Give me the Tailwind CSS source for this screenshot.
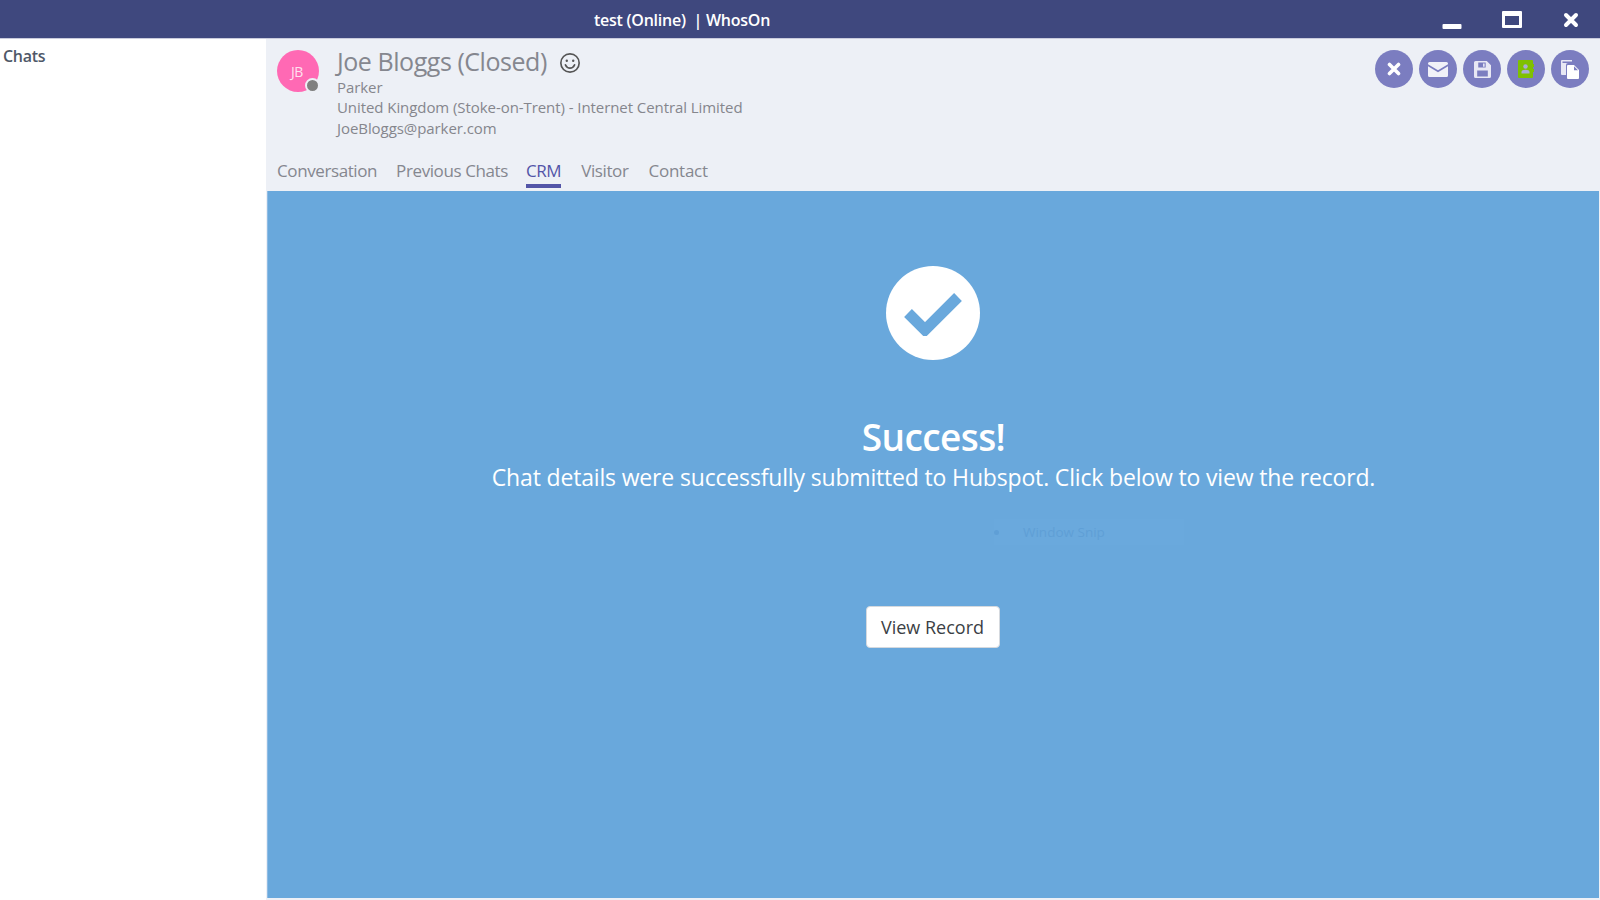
<!DOCTYPE html>
<html lang="en">
<head>
    <meta charset="UTF-8">
    <title>test (Online) | WhosOn</title>
    <script src="https://cdn.jsdelivr.net/npm/@tailwindcss/browser@4"></script>
</head>
<body class="h-[900px] w-[1600px] overflow-hidden bg-white flex flex-col font-['Open_Sans',sans-serif]">
    <!-- title bar -->
    <header class="h-[39px] shrink-0 bg-[#3f487e] border-b border-[#c9cbdc] flex items-center relative">
        <div class="w-[1364px] text-center text-white text-[16px] font-semibold tracking-[-0.25px] mt-[2px]">test (Online) &nbsp;| WhosOn</div>
        <div class="flex items-center text-white mt-[1px]">
            <svg class="w-5 h-5 ml-[78px]" viewBox="0 0 20 20"><rect x="0.5" y="14" width="19" height="5" rx="1" fill="#fff"/></svg>
            <svg class="w-5 h-5 ml-[40px]" viewBox="0 0 20 20"><path fill="#fff" fill-rule="evenodd" d="M1 1h18a1 1 0 0 1 1 1v15a1 1 0 0 1-1 1H1a1 1 0 0 1-1-1V2a1 1 0 0 1 1-1zm2 5v9h14V6z"/></svg>
            <svg class="w-4 h-4 ml-[41px]" viewBox="0 0 16 16"><path d="M3 3l10 10M13 3L3 13" stroke="#fff" stroke-width="4" stroke-linecap="round"/></svg>
        </div>
    </header>

    <div class="flex-1 flex min-h-0">
        <aside class="w-[266px] shrink-0 pl-[3px] pt-[5px] text-[16px] font-semibold text-[#4f5868] tracking-[-0.3px]">Chats</aside>

        <main class="flex-1 bg-[#edf0f6] flex flex-col pb-[2px] pl-px pr-px">
            <section class="h-[152px] shrink-0 flex relative pl-[10px] pt-[11px]">
                <div class="relative w-[42px] h-[42px] rounded-full bg-[#ff69b4] text-white text-[14px] flex items-center justify-center shrink-0">
                    <span class="tracking-[-0.5px] opacity-80 -ml-[2px]">JB</span>
                    <span class="absolute right-[-1px] bottom-[-1px] w-[15px] h-[15px] rounded-full bg-[#808080] border-2 border-[#edf0f6]"></span>
                </div>
                <div class="ml-[18px] -mt-[3px] text-[#85868d]">
                    <div class="flex items-center h-[30px]">
                        <h1 class="text-[25px] font-medium text-[#85878f] tracking-[-0.45px]">Joe Bloggs (Closed)</h1>
                        <svg class="w-[22px] h-[22px] ml-[12px] mt-[1px]" viewBox="0 0 24 24" fill="none" stroke="#555" stroke-width="1.8"><circle cx="12" cy="12" r="10"/><circle cx="8.5" cy="9.5" r="1.3" fill="#555" stroke="none"/><circle cx="15.500" cy="9.5" r="1.3" fill="#555" stroke="none"/><path d="M7 14c1.200 2.600 3 3.600 5 3.600s3.800-1 5-3.600" stroke-linecap="round"/></svg>
                    </div>
                    <div class="text-[15px] leading-[20px] tracking-[-0.07px]">Parker</div>
                    <div class="text-[15px] leading-[20px] tracking-[-0.07px]">United Kingdom (Stoke-on-Trent) - Internet Central Limited</div>
                    <div class="text-[15px] leading-[20px] mt-[1px] tracking-[-0.07px]">JoeBloggs@parker.com</div>
                </div>
                <nav class="absolute left-[10px] top-[119px] flex gap-[19px] text-[17px] font-medium text-[#85878f] tracking-[-0.4px] leading-[26px]">
                    <span>Conversation</span>
                    <span class="-mr-[1px]">Previous Chats</span>
                    <span class="mr-[1px] text-[#5355a8] border-b-[4px] border-[#5355a8] h-[30px]">CRM</span>
                    <span class="mr-[1px]">Visitor</span>
                    <span class="tracking-[-0.25px]">Contact</span>
                </nav>
                <div class="absolute right-[10px] top-[11px] flex gap-[6px]">
                    <button class="w-[38px] h-[38px] rounded-full bg-[#7b7dc0] flex items-center justify-center">
                        <svg class="w-[14px] h-[14px]" viewBox="0 0 14 14"><path d="M2.500 2.500l9 9M11.500 2.500l-9 9" stroke="#fff" stroke-width="3.600" stroke-linecap="round"/></svg>
                    </button>
                    <button class="w-[38px] h-[38px] rounded-full bg-[#7b7dc0] flex items-center justify-center">
                        <svg class="w-[20px] h-[15px]" viewBox="0 0 20 15"><path fill="#f1f1f8" d="M1.500 0h17A1.500 1.500 0 0 1 20 1.500v.7l-10 6-10-6v-.7A1.500 1.500 0 0 1 1.500 0zM0 4.200l10 6 10-6v9.300a1.500 1.500 0 0 1-1.500 1.500h-17A1.500 1.500 0 0 1 0 13.500z"/></svg>
                    </button>
                    <button class="w-[38px] h-[38px] rounded-full bg-[#7b7dc0] flex items-center justify-center">
                        <svg class="w-[17px] h-[17px]" viewBox="0 0 16 16"><path fill="#e8e8f4" fill-rule="evenodd" d="M1.500 0H12l4 4v10.500a1.500 1.500 0 0 1-1.500 1.500h-13A1.500 1.500 0 0 1 0 14.500v-13A1.500 1.500 0 0 1 1.500 0zM4 1.500V6h7V1.500zm4.500.8h1.500v3H8.500zM3 9v5.500h10V9z"/></svg>
                    </button>
                    <button class="w-[38px] h-[38px] rounded-full bg-[#7b7dc0] flex items-center justify-center">
                        <svg class="w-[16px] h-[18px]" viewBox="0 0 16 18"><path fill="#7fc000" d="M1 0h13a1 1 0 0 1 1 1v3h1v3h-1v2h1v3h-1v5a1 1 0 0 1-1 1H1a1 1 0 0 1-1-1V1a1 1 0 0 1 1-1z"/><circle cx="7.500" cy="6.500" r="2.200" fill="#a9acd8"/><path fill="#a9acd8" d="M3.500 13.500v-1.500c0-1.500 1.500-2.300 4-2.300s4 .8 4 2.300v1.500z"/></svg>
                    </button>
                    <button class="w-[38px] h-[38px] rounded-full bg-[#7b7dc0] flex items-center justify-center">
                        <svg class="w-[19px] h-[19px]" viewBox="0 0 19 19"><path fill="#e8e8f4" d="M1 0h10v1.500H1.500V3H11v0H7a2 2 0 0 0-2 2v10H1a1 1 0 0 1-1-1V1a1 1 0 0 1 1-1z"/><path fill="#fff" d="M7 5h6l5 5v8a1 1 0 0 1-1 1H7a1 1 0 0 1-1-1V6a1 1 0 0 1 1-1z"/><path fill="#7b7dc0" d="M13 6.200v4h4z"/></svg>
                    </button>
                </div>
            </section>

            <section class="flex-1 bg-[#69a8dc] border-l border-[#8fbce4] flex flex-col items-center text-white relative">
                <div class="mt-[75px] mr-[2px] w-[94px] h-[94px] rounded-full bg-white flex items-center justify-center">
                    <svg class="w-[62px] h-[46px]" viewBox="0 0 62 46"><path d="M6 23l17 17L56 7" fill="none" stroke="#69a8dc" stroke-width="11"/></svg>
                </div>
                <h2 class="mt-[54px] text-[37px] leading-[46px] font-semibold tracking-[-0.6px]">Success!</h2>
                <p class="mt-[1px] text-[23px] leading-[32px] tracking-[-0.165px]">Chat details were successfully submitted to Hubspot. Click below to view the record.</p>
                <div class="absolute left-[726px] top-[328px] w-[190px] h-[26px] flex items-center text-[13.500px] text-[#5f9fd6] bg-[#6aa9dd]">
                    <span class="w-[5px] h-[5px] rounded-full bg-[#5f9fd6]"></span><span class="ml-[24px]">Window Snip</span>
                </div>
                <button class="mt-[113px] mr-[2px] w-[134px] h-[42px] rounded-[4px] bg-white border border-[#d5d9de] text-[#3b3f45] text-[18px]">View Record</button>
            </section>
        </main>
    </div>
</body>
</html>
